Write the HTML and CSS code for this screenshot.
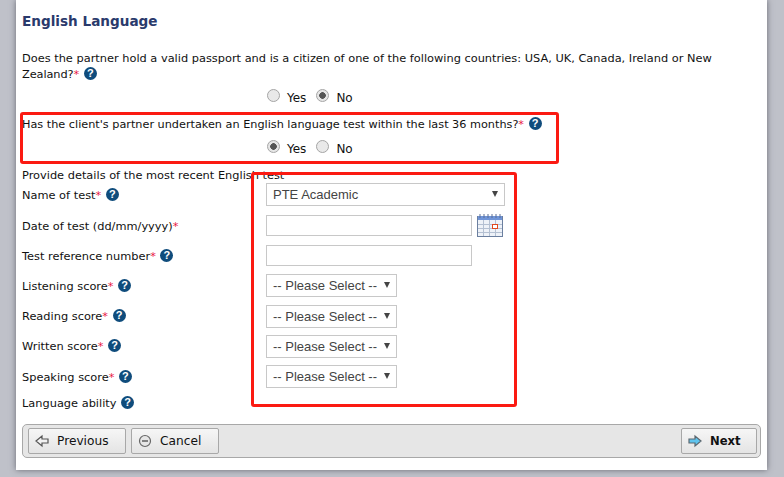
FILE: index.html
```html
<!DOCTYPE html>
<html lang="en">
<head>
    <meta charset="UTF-8">
    <meta name="viewport" content="width=device-width, initial-scale=1.0">
    <title>English Language</title>
    <link rel="stylesheet" href="styles.css">
</head>
<body>
    <div class="panel">
        <h2 class="title">English Language</h2>

        <p class="question"><span>Does the partner hold a valid passport and is a citizen of one of the following countries: USA, UK, Canada, Ireland or New</span><br><span class="last-word">Zealand?</span><span class="req">*</span> <span class="help">?</span></p>
        <div class="choices first-choices">
            <label class="choice"><input type="radio" name="passport">Yes</label>
            <label class="choice"><input type="radio" name="passport" checked>No</label>
        </div>

        <p class="question second">Has the client's partner undertaken an English language test within the last 36 months?<span class="req">*</span> <span class="help">?</span></p>
        <div class="choices">
            <label class="choice"><input type="radio" name="test" checked>Yes</label>
            <label class="choice"><input type="radio" name="test">No</label>
        </div>

        <p class="intro">Provide details of the most recent English test</p>

        <div class="fields">
            <div class="row row-first">
                <label class="label">Name of test<span class="req">*</span> <span class="help">?</span></label>
                <div class="fake-select wide">PTE Academic</div>
            </div>
            <div class="row">
                <label class="label">Date of test (dd/mm/yyyy)<span class="req">*</span></label>
                <div class="date-wrap">
                    <input class="text-input" type="text">
                    <svg class="calendar" width="26" height="23" viewBox="0 0 26 23">
                        <rect x="0.5" y="2.5" width="25" height="20" fill="#eef2f8" stroke="#6b7f9f"/>
                        <rect x="1" y="2" width="24" height="4" fill="#6f94d8"/>
                        <path d="M3 0v4M7 0v4M11 0v4M15 0v4M19 0v4M23 0v4" stroke="#5a6f96" stroke-width="1"/>
                        <path d="M1 10.5h24M1 14.5h24M1 18.5h24M6.5 6v16M12.5 6v16M18.5 6v16" stroke="#b4c0d2" stroke-width="1"/>
                        <rect x="15.5" y="10.5" width="5" height="4" fill="#fff" stroke="#e2471c"/>
                    </svg>
                </div>
            </div>
            <div class="row">
                <label class="label">Test reference number<span class="req">*</span> <span class="help">?</span></label>
                <input class="text-input" type="text">
            </div>
            <div class="row">
                <label class="label">Listening score<span class="req">*</span> <span class="help">?</span></label>
                <div class="fake-select">-- Please Select --</div>
            </div>
            <div class="row">
                <label class="label">Reading score<span class="req">*</span> <span class="help">?</span></label>
                <div class="fake-select">-- Please Select --</div>
            </div>
            <div class="row">
                <label class="label">Written score<span class="req">*</span> <span class="help">?</span></label>
                <div class="fake-select">-- Please Select --</div>
            </div>
            <div class="row">
                <label class="label">Speaking score<span class="req">*</span> <span class="help">?</span></label>
                <div class="fake-select">-- Please Select --</div>
            </div>
            <div class="row row-last">
                <label class="label">Language ability <span class="help">?</span></label>
            </div>
        </div>

        <div class="button-bar">
            <button class="btn btn-prev" type="button">
                <svg width="14" height="14" viewBox="0 0 14 14"><path d="M1 7l6-5v3h6v4H7v3z" fill="#f2f2f2" stroke="#555" stroke-width="1.2"/></svg>
                Previous
            </button>
            <button class="btn btn-cancel" type="button">
                <svg width="14" height="14" viewBox="0 0 14 14"><circle cx="7" cy="7" r="5.5" fill="#e6e6e6" stroke="#666" stroke-width="1.2"/><path d="M4 7h6" stroke="#555" stroke-width="1.4"/></svg>
                Cancel
            </button>
            <button class="btn btn-next" type="button">
                <svg width="14" height="14" viewBox="0 0 14 14"><path d="M13 7L7 2v3H1v4h6v3z" fill="#5fc4ee" stroke="#5c6870" stroke-width="1.2"/></svg>
                Next
            </button>
        </div>

        <div class="mark mark-question"></div>
        <div class="mark mark-fields"></div>
    </div>
</body>
</html>
```

FILE: styles.css
```css
html, body {
    height: 100%;
}

body {
    margin: 0;
    overflow: hidden;
    background: #bfc1c9;
    font-family: "DejaVu Sans", sans-serif;
    font-size: 11.36px;
    color: #111;
}

.panel {
    position: relative;
    box-sizing: border-box;
    width: 751px;
    height: 470px;
    margin-left: 16px;
    padding: 13px 6px 0;
    background: #fff;
    box-shadow: 0 0 6px rgba(70, 70, 80, 0.7);
}

.title {
    margin: 0 0 20px;
    font-size: 13.6px;
    line-height: 17px;
    color: #2a3a6c;
}

.question {
    margin: 0;
    line-height: 16px;
}

.question.second {
    margin-top: 11px;
    font-size: 11.25px;
}

.question.second + .choices {
    margin-top: 8px;
}

.last-word {
    letter-spacing: -0.1px;
}

.req {
    color: #e8173f;
}

.help {
    display: inline-block;
    width: 13px;
    height: 13px;
    margin-left: 1px;
    border-radius: 50%;
    background: #0f4c7c;
    color: #fff;
    font-family: "Liberation Sans", sans-serif;
    font-size: 11px;
    font-weight: bold;
    line-height: 13px;
    text-align: center;
    vertical-align: 1px;
}

.choices {
    display: flex;
    gap: 10px;
    padding-left: 245px;
    margin-top: 9px;
    line-height: 16px;
}

.first-choices {
    margin-top: 8px;
}

.choice {
    display: flex;
    align-items: flex-start;
    gap: 7px;
    font-size: 12px;
}

.choice input {
    appearance: none;
    box-sizing: border-box;
    width: 13px;
    height: 13px;
    margin: -1px 0 0;
    border: 1px solid #a5a5a5;
    border-radius: 50%;
    background: #e9e9e9;
}

.choice input:checked {
    background: radial-gradient(circle, #555 0 3px, #e6e6e6 3.6px);
}

.intro {
    margin: 10px 0 0;
    line-height: 16px;
}

.row {
    display: grid;
    grid-template-columns: 244px 1fr;
    align-items: center;
    height: 30.2px;
}

.row-first {
    height: 24px;
    margin-bottom: 3.5px;
}

.row-first .label {
    margin-bottom: 2px;
}

.row-last {
    height: 16px;
    margin-top: 3px;
}

.fake-select {
    position: relative;
    box-sizing: border-box;
    width: 131px;
    height: 23px;
    padding-left: 6px;
    border: 1px solid #c8c8c8;
    font-family: "Liberation Sans", sans-serif;
    font-size: 13px;
    line-height: 21px;
    color: #444;
}

.fake-select.wide {
    width: 239px;
    margin-bottom: 2px;
}

.fake-select::after {
    content: "";
    position: absolute;
    right: 6px;
    top: 7px;
    border-left: 3.5px solid transparent;
    border-right: 3.5px solid transparent;
    border-top: 6px solid #444;
}

.text-input {
    box-sizing: border-box;
    width: 206px;
    height: 21px;
    padding: 0;
    border: 1px solid #c8c8c8;
    background: #fff;
}

.date-wrap {
    display: flex;
    align-items: center;
    gap: 5px;
}

.button-bar {
    display: flex;
    align-items: center;
    gap: 5px;
    box-sizing: border-box;
    height: 34px;
    margin-top: 13px;
    padding: 0 3px 0 5px;
    border: 1px solid #a8a8a8;
    border-radius: 5px;
    background: #e6e6e6;
}

.btn {
    display: flex;
    align-items: center;
    box-sizing: border-box;
    height: 26px;
    padding: 0 0 0 6px;
    border: 1px solid #a8a8a8;
    border-radius: 2px;
    background: linear-gradient(#f6f6f6, #e4e4e4);
    font-family: "DejaVu Sans", sans-serif;
    font-size: 12.2px;
    color: #111;
}

.btn svg {
    margin-right: 8px;
}

.btn-prev {
    width: 98px;
}

.btn-cancel {
    width: 88px;
}

.btn-next {
    width: 76px;
    margin-left: auto;
    font-weight: bold;
    font-size: 11.6px;
}

/* red annotation boxes drawn over the form */
.mark {
    position: absolute;
    box-sizing: border-box;
    border: 3px solid #fb1a12;
    border-radius: 3px;
}

.mark-question {
    left: 4px;
    top: 112px;
    width: 539px;
    height: 52px;
}

.mark-fields {
    left: 235px;
    top: 172px;
    width: 266px;
    height: 235px;
}
```
